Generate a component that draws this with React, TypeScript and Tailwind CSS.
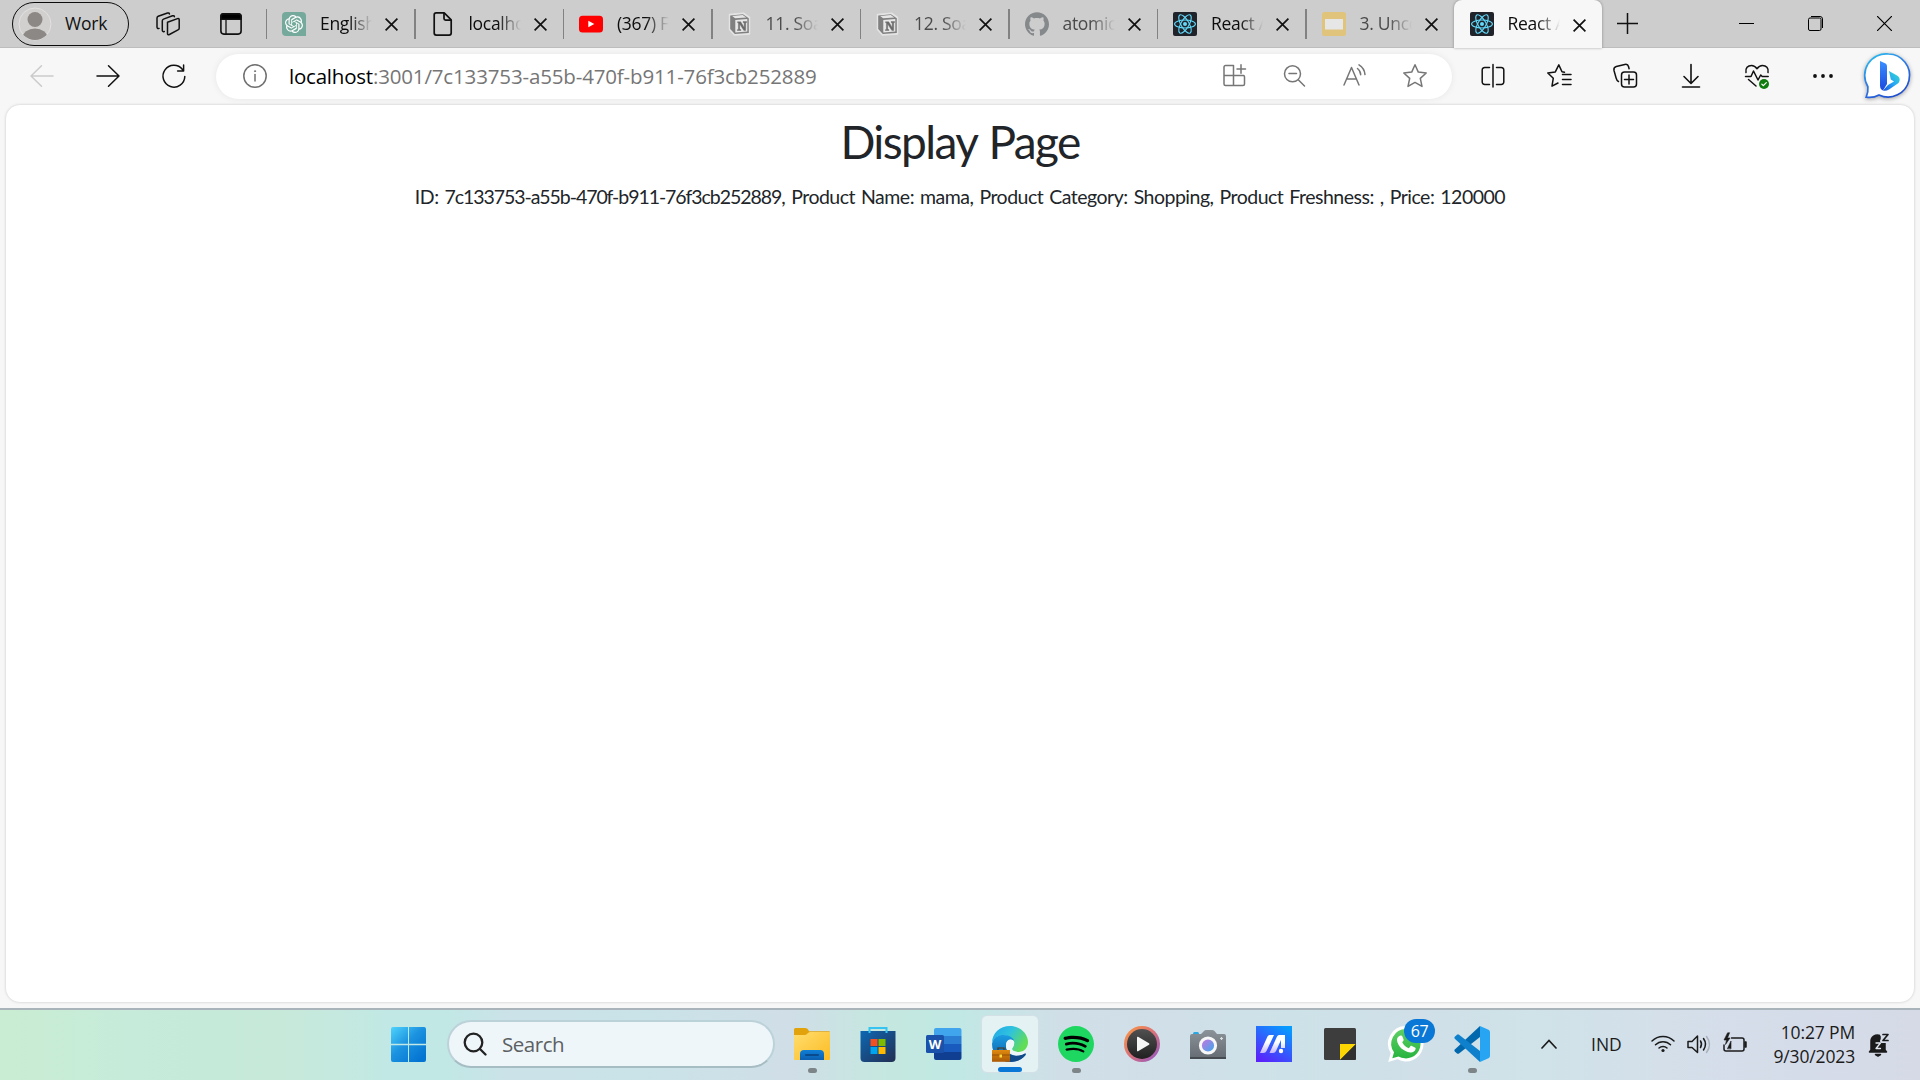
import React from "react";
import { SiOpenai, SiGithub, SiSpotify } from "react-icons/si";

type IconProps = { className?: string };

const CloseX = ({ className = "size-[13px]" }: IconProps) => (
  <svg viewBox="0 0 13 13" className={className} fill="none" stroke="#111" strokeWidth="1.7">
    <path d="M.6.6l11.8 11.8M12.4.6L.6 12.4" />
  </svg>
);

const ReactFavicon = () => (
  <svg viewBox="0 0 24 24" className="size-6">
    <rect width="24" height="24" rx="2" fill="#20232a" />
    <g fill="none" stroke="#61dafb" strokeWidth="1.1">
      <ellipse cx="12" cy="12" rx="10.4" ry="4" />
      <ellipse cx="12" cy="12" rx="10.4" ry="4" transform="rotate(60 12 12)" />
      <ellipse cx="12" cy="12" rx="10.4" ry="4" transform="rotate(120 12 12)" />
    </g>
    <circle cx="12" cy="12" r="2" fill="#61dafb" />
  </svg>
);

const OpenAiFavicon = () => (
  <div className="flex size-6 items-center justify-center rounded-tl-[4px] rounded-tr-[4px] rounded-bl-[4px] bg-[#75a99c]">
    <SiOpenai className="size-[18px] text-white" />
  </div>
);

const FileFavicon = () => (
  <svg viewBox="0 0 24 24" className="size-6" fill="none" stroke="#111" strokeWidth="1.7" strokeLinejoin="round">
    <path d="M5.200.9h8l7 7v13.200a2 2 0 0 1-2 2H5.200a2 2 0 0 1-2-2V2.900a2 2 0 0 1 2-2z" />
    <path d="M13 1v5.500a1.600 1.600 0 0 0 1.600 1.600h5.400" />
  </svg>
);

const YoutubeFavicon = () => (
  <svg viewBox="0 0 24 24" className="size-6">
    <rect x="0" y="3.700" width="24" height="16.800" rx="3.500" fill="#f00" />
    <path d="M9.300 8.700v6.600l6-3.300z" fill="#fff" />
  </svg>
);

const NotionFavicon = () => (
  <svg viewBox="0 0 24 24" className="size-6">
    <path d="M1.500 2.600L15.500 1.200l6 4.200V22L6.500 23l-5-5.500z" fill="#e8e8e8" stroke="#e4e4e4" strokeWidth="1.500" strokeLinejoin="round" />
    <path d="M2.200 3.400L15 2.300l5.800 3.900v14.800L6.800 22l-4.600-5z" fill="#808080" />
    <path d="M4.200 4l10.500-.9 3.600 2.400-11.200.8z" fill="#e6e6e6" />
    <path d="M7.300 7.900l12-.8v12.500l-12 .8z" fill="#e8e8e8" />
    <path d="M9.500 9.800h3.200l3.500 5.600v-4.600l-1.200-.4v-.8h3.700v.8l-1 .4v7.800h-1.800l-4.200-6.500v5.200l1.300.4v.8H9.300v-.8l1.100-.3v-6.600l-.9-.2z" fill="#6a6a6a" stroke="#6a6a6a" strokeWidth=".4" />
  </svg>
);

const GithubFavicon = () => <SiGithub className="size-6 text-[#85898b]" />;

const SlidesFavicon = () => (
  <svg viewBox="0 0 24 24" className="size-6">
    <rect width="24" height="24" rx="2.500" fill="#e0c47c" />
    <rect x="3" y="7" width="18" height="10.500" fill="#e6e6e6" />
  </svg>
);

const tabs = [
  { Icon: OpenAiFavicon, label: "English", dim: false },
  { Icon: FileFavicon, label: "localhost", dim: false },
  { Icon: YoutubeFavicon, label: "(367) F", dim: false },
  { Icon: NotionFavicon, label: "11. Soal", dim: true },
  { Icon: NotionFavicon, label: "12. Soal", dim: true },
  { Icon: GithubFavicon, label: "atomic", dim: true },
  { Icon: ReactFavicon, label: "React A", dim: false },
  { Icon: SlidesFavicon, label: "3. Unco", dim: true },
];

const TabBody = ({ Icon, label, dim }: (typeof tabs)[number]) => (
  <>
    <span className="ml-[15px] shrink-0"><Icon /></span>
    <span
      className={`mb-0.5 ml-[14px] w-[52px] shrink-0 overflow-hidden whitespace-nowrap text-[17.5px] leading-6 tracking-[-0.3px] [mask-image:linear-gradient(to_right,black_55%,transparent)] ${dim ? "text-[#4a4a4a]" : "text-[#0c0c0c]"}`}
    >
      {label}
    </span>
    <span className="mt-0.5 ml-[13px] shrink-0"><CloseX /></span>
  </>
);

const TabBar = () => (
  <div className="flex h-12 border-b border-[#bdbdbd] bg-[#cdcdcd]">
    <div className="flex w-[265.5px] shrink-0 items-start">
      <div className="mt-0.5 ml-3 flex h-11 w-[117px] items-center rounded-full border-[1.5px] border-[#0c0c0c]">
        <svg viewBox="0 0 34 34" className="ml-[5px] size-[34px]">
          <defs><clipPath id="avatar"><circle cx="17" cy="17" r="16" /></clipPath></defs>
          <circle cx="17" cy="17" r="16" fill="#d2d0ce" stroke="#e4e2e0" />
          <g clipPath="url(#avatar)" fill="#8b8885">
            <circle cx="17" cy="12.500" r="7.500" />
            <ellipse cx="17" cy="30.500" rx="12.500" ry="9" />
          </g>
        </svg>
        <span className="mb-0.5 ml-[13px] text-[17.5px] tracking-[-0.2px] text-[#111]">Work</span>
      </div>
      <svg viewBox="0 0 24 24" className="mt-3 ml-[27px] size-6" fill="none" stroke="#111" strokeWidth="1.500" strokeLinejoin="round" strokeLinecap="round">
        <path d="M11.500 10.200l10-3.600c1-.3 1.700.2 1.700 1.200v8.400c0 .8-.4 1.400-1.200 1.700l-8.600 4.600c-1.200.5-1.900.1-1.900-1.100z" />
        <path d="M8.300 19.500c-1.300.4-2-.1-2-1.300V8.800c0-.8.4-1.400 1.200-1.700l9-3.300c1-.3 1.700 0 1.900.9" />
        <path d="M3 16.400c-1.300.4-2-.1-2-1.300V6c0-.8.4-1.400 1.200-1.700L11.500 1c1-.3 1.700 0 1.900.9" />
      </svg>
      <svg viewBox="0 0 22 22" className="mt-[13px] ml-10 size-[22px]" fill="none" stroke="#111" strokeWidth="1.600">
        <rect x=".9" y=".9" width="20.200" height="20.200" rx="3" />
        <path d="M.9 6.300V3.500A2.600 2.600 0 0 1 3.500.9h15a2.600 2.600 0 0 1 2.600 2.600v2.800z" fill="#000" />
        <path d="M6 6v15" strokeWidth="1.300" />
      </svg>
    </div>
    {tabs.map((t, i) => (
      <div key={i} className="flex w-[148.5px] shrink-0 items-center">
        <div className="h-[30px] w-[1.5px] shrink-0 bg-[#828282]" />
        <TabBody {...t} />
      </div>
    ))}
    <div className="flex h-12 w-[148.5px] shrink-0 items-center rounded-t-[8px] bg-[#f7f7f7] pl-px shadow-[0_0_3px_rgba(0,0,0,0.35)]">
      <TabBody Icon={ReactFavicon} label="React A" dim={false} />
    </div>
    <div className="flex grow items-center pb-px">
      <svg viewBox="0 0 21 21" className="ml-[15px] size-[21px]" stroke="#111" strokeWidth="1.500"><path d="M0 10.500h21M10.500 0v21" /></svg>
      <svg viewBox="0 0 15 15" className="ml-[101px] size-[15px]" stroke="#000"><path d="M0 7.500h15" /></svg>
      <svg viewBox="0 0 15 15" className="ml-[54px] size-[15px]" fill="none" stroke="#000">
        <rect x=".5" y="2" width="12.500" height="12.500" rx="1.500" /><path d="M3 .5h9a2.500 2.500 0 0 1 2.500 2.500v9" />
      </svg>
      <svg viewBox="0 0 15 15" className="ml-[54px] size-[15px]" stroke="#000" strokeWidth="1.200"><path d="M0 0l15 15M15 0L0 15" /></svg>
    </div>
  </div>
);

const Glyph = ({ children, className = "" }: { children: React.ReactNode; className?: string }) => (
  <svg viewBox="0 0 24 24" className={`size-6 shrink-0 overflow-visible ${className}`} fill="none" stroke="currentColor" strokeWidth="1.500" strokeLinecap="round" strokeLinejoin="round">
    {children}
  </svg>
);

const starPath = "M12 .8l3.300 7.300 7.900.9-5.900 5.400 1.700 8L12 18.400l-7 4 1.700-8L.8 9l7.900-.9z";

const Toolbar = () => (
  <div className="flex h-14 items-center bg-[#f7f7f7] text-[#111]">
    <Glyph className="ml-[30px] text-[#cbcbcb]"><path d="M23 12H1M11.500 1.800L1 12l10.500 10.200" /></Glyph>
    <Glyph className="ml-[42px]"><path d="M1 12h22M12.500 1.800L23 12 12.500 22.200" /></Glyph>
    <Glyph className="ml-[42px]"><path d="M22.800 12.500A10.900 10.900 0 1 1 20.500 5.500M21.600.9v6h-6" /></Glyph>
    <div className="ml-[30px] flex h-[45px] w-[1236px] shrink-0 items-center rounded-full bg-white shadow-[0_0_7px_rgba(0,0,0,0.07)]">
      <Glyph className="ml-[27px] text-[#707070]">
        <circle cx="12" cy="12" r="11.200" /><path d="M12 10.500v6.500" /><circle cx="12" cy="7.200" r=".6" fill="currentColor" strokeWidth=".8" />
      </Glyph>
      <span className="ml-[22px] text-[20.5px] leading-6 tracking-[-0.15px] whitespace-nowrap text-[#767676]">
        <span className="tracking-[-0.22px] text-black">localhost</span>:3001/7c133753-a55b-470f-b911-76f3cb252889
      </span>
      <div className="mr-[25px] ml-auto flex gap-9 text-[#767676]">
        <Glyph>
          <path d="M2.500 1.500h8v20h-8a1.500 1.500 0 0 1-1.500-1.500V3a1.500 1.500 0 0 1 1.500-1.500zM1 11.500h19.500A1.500 1.500 0 0 1 21.500 13v7a1.500 1.500 0 0 1-1.500 1.500h-9.500M14 5h8.500M18 .8v8.500" />
        </Glyph>
        <Glyph><circle cx="9.500" cy="9.800" r="8" /><path d="M15.500 16l6 6M6 9.500h7.500" /></Glyph>
        <Glyph>
          <path d="M1 21L8.500 3.500 16 21M3.500 15h10M14.500 4.500a8 8 0 0 1 3.200 6.200M16 .8a12.500 12.500 0 0 1 6 9.800" />
        </Glyph>
        <Glyph><path d={starPath} /></Glyph>
      </div>
    </div>
    <div className="ml-[29px] flex shrink-0 gap-[42px]">
      <Glyph><path d="M12 .5v22.500M8.500 3.500H4A2.500 2.500 0 0 0 1.200 6v12A2.500 2.500 0 0 0 4 20.500h4.500M15.500 3.500H20A2.500 2.500 0 0 1 22.800 6v12a2.500 2.500 0 0 1-2.800 2.500h-4.500" /></Glyph>
      <Glyph><path d="M17.500 8.200L15 7.800 11.800.9 8.300 7.900.8 9l5.500 5.200L5 22.200l6-3.200M15.500 10.500H24M15.500 15.500H24M15.500 20.500H24" /></Glyph>
      <Glyph>
        <rect x="8.500" y="8" width="15" height="15" rx="3" /><path d="M16 11v9M11.500 15.500h9M5.500 17.500c-1.300-.5-2-2-2.400-3.500L1 6.500C.6 4.500 1.500 3 3.300 2.500l8.500-2c1.700-.4 3.300.5 3.700 2l.6 2.200" />
      </Glyph>
      <Glyph><path d="M12 .5V19M5 12.500l7 7 7-7M3.500 23h17" strokeWidth="1.600" /></Glyph>
      <Glyph>
        <path d="M1 8.500C0 4 3 1.500 6.500 1.500c2.500 0 4.300 1.500 5.500 3.200 1.200-1.700 3-3.200 5.500-3.200 3.500 0 6.500 2.500 5.500 7M.5 12.500H6L8.500 7l4.500 9 2.700-5 1.500 1.500h6M3.500 15.500l7.500 6.500" />
        <circle cx="19" cy="20" r="5" fill="#107c10" stroke="none" /><path d="M16.800 20.200l1.500 1.500 3-3" stroke="#fff" strokeWidth="1.200" />
      </Glyph>
      <Glyph><g fill="currentColor" stroke="none"><circle cx="4" cy="12" r="1.900" /><circle cx="12" cy="12" r="1.900" /><circle cx="20" cy="12" r="1.900" /></g></Glyph>
    </div>
    <svg viewBox="0 0 46 46" className="ml-[30px] size-[46px] shrink-0 overflow-visible drop-shadow-[0_1px_2px_rgba(0,0,0,0.35)]">
      <defs>
        <linearGradient id="bing-ring" x1="0" y1="0" x2=".6" y2="1"><stop offset="0" stopColor="#25c5ee" /><stop offset=".5" stopColor="#2f7fe8" /><stop offset="1" stopColor="#1f4fd0" /></linearGradient>
        <linearGradient id="bing-b" x1="0" y1="0" x2="0" y2="1"><stop offset="0" stopColor="#3a8fff" /><stop offset="1" stopColor="#1b48dd" /></linearGradient>
        <linearGradient id="bing-c" x1="1" y1="0" x2="0" y2="1"><stop offset="0" stopColor="#35e0c8" /><stop offset=".5" stopColor="#27a8f5" /><stop offset="1" stopColor="#1b55e0" /></linearGradient>
      </defs>
      <path d="M23.500 1a21.500 21.500 0 1 1-9.500 41c-3.500 1.900-8 2.800-12.800 2.200 1.500-3.500 2-7 1.700-10.500A21.500 21.500 0 0 1 23.500 1z" fill="#fff" stroke="url(#bing-ring)" strokeWidth="1.700" />
      <path d="M15 8l5 2.300c1.300.7 2 1.600 2 3.200V31l-4 6.500c-2-.8-3-2.500-3-5z" fill="url(#bing-b)" />
      <path d="M24 18l8 4.500c3 1.800 3.500 5 1.500 7.500L24 36.500c-2 1.200-4.200 1.500-6 1l5-5.500 6-3.500-3.200-2z" fill="url(#bing-c)" />
    </svg>
  </div>
);

const Page = () => (
  <div className="flex h-[904px] bg-[#f7f7f7] px-1.5 pt-px pb-1.5">
    <main className="grow rounded-[14px] bg-white font-['Lato'] text-[#212529] shadow-[0_0_3px_rgba(0,0,0,0.2)]">
      <h1 className="mt-2 text-center text-[46px] leading-[58px] tracking-[-1.6px] [word-spacing:2px]">Display Page</h1>
      <p className="mt-[11px] text-center text-[19.5px] leading-[30px] tracking-[-0.5px] whitespace-nowrap [word-spacing:1.5px]">
        ID: <span className="tracking-[-1.06px]">7c133753-a55b-470f-b911-76f3cb252889</span>, Product Name: mama, Product Category: Shopping, Product Freshness: , Price: 120000
      </p>
    </main>
  </div>
);

const StartIcon = () => (
  <svg viewBox="0 0 35 35" className="size-[35px]">
    <defs><linearGradient id="win" gradientUnits="userSpaceOnUse" x1="0" y1="0" x2="30" y2="32"><stop offset="0" stopColor="#4fd3fc" /><stop offset=".5" stopColor="#1c93e0" /><stop offset="1" stopColor="#0474d2" /></linearGradient></defs>
    <path fill="url(#win)" d="M2 0h15v16.800H0V2a2 2 0 0 1 2-2zM18 0h15a2 2 0 0 1 2 2v14.800H18zM0 18.200h17V35H2a2 2 0 0 1-2-2zM18 18.200h17V33a2 2 0 0 1-2 2H18z" />
  </svg>
);

const App36 = ({ children }: { children: React.ReactNode }) => (
  <svg viewBox="0 0 36 36" className="size-9 overflow-visible">{children}</svg>
);

const Explorer = () => (
  <App36>
    <defs>
      <linearGradient id="fold" x1="0" y1="0" x2="1" y2="1"><stop offset="0" stopColor="#ffdd6e" /><stop offset="1" stopColor="#fcbc23" /></linearGradient>
      <linearGradient id="foldb" x1="0" y1="0" x2="0" y2="1"><stop offset="0" stopColor="#0f7fd6" /><stop offset="1" stopColor="#0c5fb0" /></linearGradient>
    </defs>
    <path d="M0 3.500A1.500 1.500 0 0 1 1.500 2H11c2 0 3 1 4 3.200H35a1 1 0 0 1 1 1V12H0z" fill="#e2a20c" />
    <path d="M0 9h11c2 0 3-3 5-3h20v27a1 1 0 0 1-1 1H1a1 1 0 0 1-1-1z" fill="url(#fold)" />
    <path d="M6 34v-6a4 4 0 0 1 4-4h16a4 4 0 0 1 4 4v6z" fill="url(#foldb)" />
    <rect x="11" y="28" width="14" height="2" rx="1" fill="#094a8c" />
  </App36>
);

const Store = () => (
  <App36>
    <defs><linearGradient id="store" x1="0" y1="0" x2="1" y2="1"><stop offset="0" stopColor="#0d68b4" /><stop offset="1" stopColor="#232e52" /></linearGradient></defs>
    <path d="M.5 5h35v27a4 4 0 0 1-4 4h-27a4 4 0 0 1-4-4z" fill="url(#store)" />
    <path d="M9.500 7V2h17v5" fill="none" stroke="#35c4f2" strokeWidth="2" />
    <path d="M10.500 13H17.500v7H10.500z" fill="#f25022" /><path d="M18.500 13h7v7h-7z" fill="#7fba00" />
    <path d="M10.500 21h7v7h-7z" fill="#00a4ef" /><path d="M18.500 21h7v7h-7z" fill="#ffb900" />
  </App36>
);

const Word = () => (
  <App36>
    <clipPath id="wordclip"><rect x="8" y="2" width="27.500" height="32" rx="2" /></clipPath>
    <g clipPath="url(#wordclip)">
      <path d="M8 2h28v8H8z" fill="#41a5ee" /><path d="M8 10h28v8H8z" fill="#2b7cd3" />
      <path d="M8 18h28v8H8z" fill="#185abd" /><path d="M8 26h28v8H8z" fill="#103f91" />
    </g>
    <rect x="0" y="9" width="18" height="18" rx="1.500" fill="#1a52ab" />
    <text x="9" y="22.500" textAnchor="middle" fontFamily="Open Sans" fontWeight="700" fontSize="13" fill="#fff">W</text>
  </App36>
);

const Edge = () => (
  <App36>
    <defs>
      <linearGradient id="edge-a" x1="0" y1="0" x2="1" y2=".5"><stop offset="0" stopColor="#1fa5e8" /><stop offset=".5" stopColor="#2fc2df" /><stop offset="1" stopColor="#62dd55" /></linearGradient>
      <linearGradient id="edge-b" x1="0" y1="0" x2="0" y2="1"><stop offset="0" stopColor="#1b9de2" /><stop offset="1" stopColor="#0c59a4" /></linearGradient>
      <linearGradient id="case" x1="0" y1="0" x2="0" y2="1"><stop offset="0" stopColor="#e08a10" /><stop offset="1" stopColor="#ab5a05" /></linearGradient>
    </defs>
    <path d="M0 17C0 7 8 0 18 0s18 7.500 18 16c0 6-4 10-9.500 10-4 0-6.500-1.500-6.500-3 0-1 1.800-2 1.800-5 0-5-5-8.500-10.500-8.500C5 9.500 1 13 0 17z" fill="url(#edge-a)" />
    <path d="M0 18C1 11.500 6 9 11.500 9 17 9 21.500 12 22 14.500c-4-2-8 0-8 5.500 0 5.500 4.500 9.200 10 10 4 .5 7-1 8.500-2 1-.5 1.600.3 1 1.200C30 33.500 24.500 36 18 36 8 36 0 28 0 18z" fill="url(#edge-b)" />
    <path d="M13 20c0 6 5 9.800 11 9.800 4 0 7-1.300 8.500-2.300 1-.5 1.600.3 1 1.200C30 33.500 24.500 36 18.500 36z" fill="#114a8b" />
    <path d="M22.200 16c-.8-2-2.400-2.600-4.200-2.500-2.500.2-4 2.500-4 5.500 0 5.500 4.500 10 10.500 10 4 0 7-.8 8.300-1.800l.4-2.500c-2 1-4.200 1.400-6.500 1.300-4 0-6.700-1.500-6.700-3.200 0-1.200 2.700-2.800 2.200-6.800z" fill="#edf6f8" />
    <path d="M18 24v11.800H0V24z" fill="url(#case)" /><path d="M6 24v-2h6v2" fill="none" stroke="#53310a" strokeWidth="1.200" />
    <path d="M0 29h18" stroke="#8a4703" strokeWidth=".8" /><rect x="7.500" y="28.500" width="2.500" height="3" fill="#ffd83d" />
  </App36>
);

const Spotify = () => (
  <div className="flex size-9 items-center justify-center rounded-full bg-[radial-gradient(circle,#000_60%,transparent_61%)]">
    <SiSpotify className="size-9 text-[#1ed760]" />
  </div>
);

const MediaPlayer = () => (
  <App36>
    <defs>
      <linearGradient id="mp" x1="0" y1="0" x2="1" y2="1"><stop offset="0" stopColor="#ff9a3c" /><stop offset=".5" stopColor="#d9707a" /><stop offset="1" stopColor="#8c55c9" /></linearGradient>
      <linearGradient id="mpi" x1="0" y1="0" x2="0" y2="1"><stop offset="0" stopColor="#505050" /><stop offset="1" stopColor="#202020" /></linearGradient>
    </defs>
    <circle cx="18" cy="18" r="18" fill="url(#mp)" /><circle cx="18" cy="18" r="15" fill="url(#mpi)" />
    <path d="M14 10.800l11 6.500q1 .7 0 1.400l-11 6.500q-1 .5-1-.7V11.500q0-1.200 1-.7z" fill="#f6f6f6" />
  </App36>
);

const Camera = () => (
  <App36>
    <defs>
      <linearGradient id="cam" x1="0" y1="0" x2="0" y2="1"><stop offset="0" stopColor="#8b9298" /><stop offset="1" stopColor="#646b72" /></linearGradient>
      <linearGradient id="lens" x1="0" y1="0" x2="1" y2="1"><stop offset=".2" stopColor="#b57be0" /><stop offset="1" stopColor="#2ab1ee" /></linearGradient>
    </defs>
    <rect x="3" y="6" width="6" height="4" rx="1.500" fill="#2aa7e3" />
    <path d="M2 8h9l3-3q1-1 2-1h6q1.500 0 2.500 1l2.500 3h7q2 0 2 2v23H0V10q0-2 2-2z" fill="url(#cam)" />
    <path d="M0 31h36v2H0z" fill="#454b51" />
    <circle cx="18" cy="19.500" r="7.600" fill="url(#lens)" stroke="#f7f7f7" strokeWidth="3" />
    <path d="M31.500 11v3M30 12.500h3" stroke="#d8dde0" strokeWidth="1.200" />
  </App36>
);

const MyAsus = () => (
  <App36>
    <defs>
      <linearGradient id="asus" x1=".2" y1="1" x2=".8" y2="0"><stop offset="0" stopColor="#5a22fb" /><stop offset="1" stopColor="#069cff" /></linearGradient>
      <linearGradient id="asusm" x1="0" y1="1" x2="0" y2="0"><stop offset="0" stopColor="#c5b8ff" /><stop offset=".6" stopColor="#fff" /></linearGradient>
    </defs>
    <path d="M0 0h36v36H0z" fill="url(#asus)" />
    <path d="M4 27L11.500 10.500q.7-1.500 2-1.500H18L10.500 25q-.8 2-3 2zM13.500 27L21 10.500q.7-1.500 2-1.500H29v13h-4V14l-5 11q-.8 2-3 2z" fill="url(#asusm)" />
    <circle cx="25" cy="25" r="2.200" fill="#fff" />
  </App36>
);

const StickyNotes = () => (
  <App36>
    <rect x="2" y="2" width="32" height="32" rx="1.500" fill="#3d3d3d" />
    <path d="M18 18h16L18 34z" fill="#fcd602" /><path d="M34 18v14.500a1.500 1.500 0 0 1-1.500 1.500H18z" fill="#303030" />
  </App36>
);

const WhatsApp = () => (
  <div className="relative">
    <App36>
      <defs><linearGradient id="wa" x1="0" y1="0" x2="0" y2="1"><stop offset="0" stopColor="#5fd066" /><stop offset="1" stopColor="#27b43e" /></linearGradient></defs>
      <path d="M18 0a17.700 17.700 0 1 1-8.500 33.300L.2 36l2.500-9A17.700 17.700 0 0 1 18 0z" fill="#fff" />
      <path d="M18 3a14.700 14.700 0 1 1-7.500 27.400l-6.200 1.800 1.700-6A14.700 14.700 0 0 1 18 3z" fill="url(#wa)" />
      <path d="M12.500 9.500c1-.3 1.500.1 1.900 1l1.200 3c.2.500 0 1-.4 1.500l-1 1.200c1.600 3 3.600 4.800 6.600 6l1.600-1.900c.4-.5.900-.6 1.500-.3l3 1.500c.7.400.9.800.7 1.600-.5 2.400-3 3.700-5.300 3.400C15.500 25.500 10 20.500 9 14.500c-.3-2.200 1.300-4.500 3.500-5z" fill="#fff" />
    </App36>
    <span className="absolute -top-[7px] left-4 flex h-6 w-[31px] items-center justify-center rounded-full bg-[#0877d6] text-[16px] tracking-[-0.3px] text-white">67</span>
  </div>
);

const VsCode = () => (
  <App36>
    <path d="M26 0v11L5 27.500q-1 .7-2 0L.8 25.500q-1-1 0-2z" fill="#0268ad" />
    <path d="M26 36V25L5 8.700q-1-.7-2 0L.8 10.700q-1 1 0 2z" fill="#0e80cc" />
    <path d="M26 0l8.500 3.700Q36 4.500 36 6v24q0 1.500-1.500 2.300L26 36z" fill="#27a5f2" />
  </App36>
);

const apps = [
  { Icon: Explorer, state: "open" }, { Icon: Store, state: "" }, { Icon: Word, state: "" }, { Icon: Edge, state: "active" },
  { Icon: Spotify, state: "open" }, { Icon: MediaPlayer, state: "" }, { Icon: Camera, state: "" }, { Icon: MyAsus, state: "" },
  { Icon: StickyNotes, state: "" }, { Icon: WhatsApp, state: "" }, { Icon: VsCode, state: "open" },
];

const Taskbar = () => (
  <div className="flex h-[72px] items-center border-t-2 border-[#a9b4ba] bg-[linear-gradient(90deg,#c9edd2_0px,#c6ebda_130px,#c6e9da_280px,#c5e9df_340px,#c1e8e5_390px,#c1e8e5_445px,#cbe2e8_510px,#c9e3e8_640px,#d0dee7_790px,#c4e8df_890px,#c1e8e5_960px,#d0dfe7_1060px,#d0dfe8_1180px,#cde2e8_1290px,#d0dfe8_1420px,#cfe3e8_1530px,#d4dfea_1660px,#d5dce9_1800px,#d6dae7_1920px)] pb-0.5">
    <div className="ml-[391px]"><StartIcon /></div>
    <div className="ml-[21px] flex h-12 w-[328px] shrink-0 items-center rounded-full border-2 border-[#bcd2d9] border-b-[#a5bdc3] bg-[#eff6f9]">
      <svg viewBox="0 0 24 24" className="ml-[14px] size-6" fill="none" stroke="#222" strokeWidth="2.300" strokeLinecap="round"><circle cx="10.500" cy="10.500" r="8.800" /><path d="M17 17l5.500 5.500" /></svg>
      <span className="ml-[15px] text-[20.5px] tracking-[-0.45px] text-[#5b6063]">Search</span>
    </div>
    <div className="ml-1 flex">
      {apps.map(({ Icon, state }, i) => (
        <div key={i} className="flex w-[66px] justify-center">
          <div className={`relative flex size-[58px] items-center justify-center rounded-[6px] ${state === "active" ? "border border-[#d3e0e5] bg-[#e5f2f4]" : ""}`}>
            <Icon />
            {state === "active" && <div className="absolute bottom-0 h-[5px] w-6 rounded-full bg-[#0877d6]" />}
            {state === "open" && <div className="absolute bottom-0 h-[5px] w-[9px] rounded-full bg-[#7d8589]" />}
          </div>
        </div>
      ))}
    </div>
    <svg viewBox="0 0 16 10" className="ml-9 h-2.5 w-4" fill="none" stroke="#1b1b1b" strokeWidth="1.700" strokeLinecap="round"><path d="M1 9l7-7.500L15 9" /></svg>
    <span className="ml-[34px] w-[31px] text-[17.5px] text-[#1b1b1b]">IND</span>
    <div className="ml-[29px] flex gap-3 text-[#1b1b1b]">
      <Glyph><path d="M1 9a15.500 15.500 0 0 1 22 0M4.500 12.800a10.500 10.500 0 0 1 15 0M8 16a5.800 5.800 0 0 1 8 0" /><circle cx="12" cy="18.500" r="1.600" fill="currentColor" stroke="none" /></Glyph>
      <Glyph><path d="M1 9.500h4L10.500 4v16.500L5 15.500H1zM13.500 9q2 3.200 0 6.500M16.500 6.500q4 5.500 0 11.500" /><path d="M19.500 4.500q6 8 0 16" stroke="#a9b0ba" /></Glyph>
      <Glyph>
        <path d="M8.500 6H19a2 2 0 0 1 2 2v9a2 2 0 0 1-2 2H3a2 2 0 0 1-2-2v-4" /><path d="M22 10h1v5h-1z" fill="currentColor" />
        <path d="M4.500 16.500L8 9v7.500zM4.500 1L1 8h2.500L2.500 12.500 7 6H4.500L6.500 1z" fill="currentColor" strokeWidth=".6" />
      </Glyph>
    </div>
    <div className="ml-[17px] w-[91px] text-right text-[17.5px] leading-6 tracking-[-0.15px] whitespace-nowrap text-[#1b1b1b]">
      <div>10:27 PM</div>
      <div>9/30/2023</div>
    </div>
    <Glyph className="ml-[12px] text-[#1b1b1b]">
      <path d="M4 18v-8a6.500 6.500 0 0 1 9-6.500V9h5v9l1.500 2h-17z" fill="currentColor" />
      <path d="M8.500 22.500h5l-2.500 1.500z" fill="currentColor" />
      <path d="M9 11h4.500L9 16.500h4.500" stroke="#e5eaf0" strokeWidth="1.300" />
      <path d="M15 2.500h6.500L15 9h6.500" stroke="#d5dce8" strokeWidth="4" />
      <path d="M16 2.500h5L16 8.500h5" strokeWidth="1.700" />
    </Glyph>
  </div>
);

export default function App() {
  return (
    <div className="h-[1080px] w-[1920px] overflow-hidden bg-[#f7f7f7] font-['Open_Sans','Noto_Sans',sans-serif]">
      <TabBar />
      <Toolbar />
      <Page />
      <Taskbar />
    </div>
  );
}
